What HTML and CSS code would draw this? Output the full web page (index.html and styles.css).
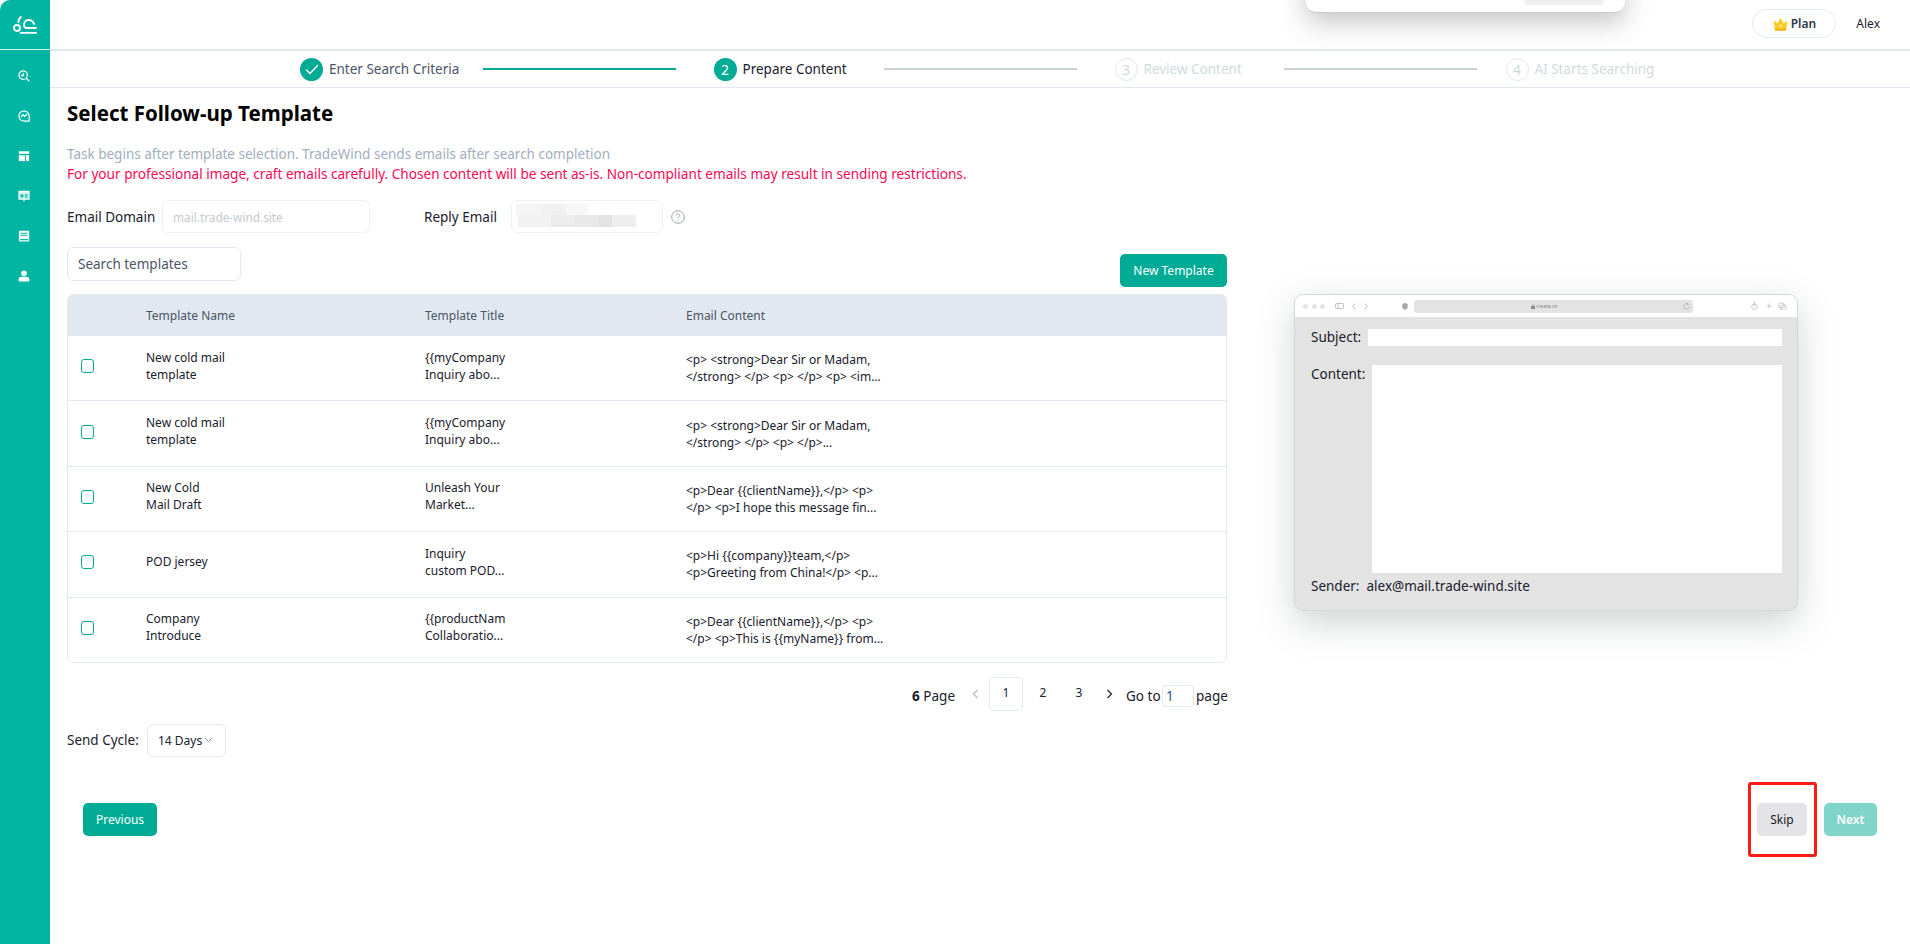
FILE: index.html
```html
<!DOCTYPE html>
<html lang="en">
<head>
<meta charset="utf-8">
<title>Select Follow-up Template</title>
<link rel="stylesheet" href="styles.css">
</head>
<body>
<div class="app">
  <aside class="sidebar">
    <div class="logo">
      <svg width="24" height="18" viewBox="0 0 24 18" fill="none" stroke="#fff" stroke-width="1.8" stroke-linecap="round"><circle cx="4" cy="12" r="3"/><path d="M7.5 16.8H23.2"/><path d="M8 1C6.2 2 5.5 3.5 5.5 6"/><path d="M21 8C20 5 18 4 15.5 4C12.5 4 11 6.5 11 9C11 11 12.5 12 14 12H23"/></svg>
    </div>
    <nav class="side-nav">
      <svg class="side-icon" viewBox="0 0 14 14" fill="none" stroke="#fff" stroke-width="1.4"><circle cx="6" cy="6" r="4.9"/><path d="M9.6 9.6L13.2 13.2"/><path d="M6.2 3.4V6.4H3.6" stroke-width="1.8"/></svg>
      <svg class="side-icon" viewBox="0 0 14 14" fill="none" stroke="#fff" stroke-width="1.4"><path d="M13 7A6 6 0 1 0 7 13H13Z"/><path d="M3.5 8.2L6 5.5L8 7.5L10.8 4.5"/></svg>
      <svg class="side-icon" viewBox="0 0 14 14" fill="#fff"><rect x="1" y="1.5" width="12" height="3"/><rect x="1" y="6" width="7" height="7"/><rect x="9.2" y="6" width="3.8" height="7"/></svg>
      <svg class="side-icon" viewBox="0 0 14 14" fill="#fff"><path d="M0.5 1H13.5V11.5H7.6V13.5H6.4V11.5H0.5Z"/><rect x="1.3" y="3" width="11.4" height="7.6" fill="#c5efe9"/><circle cx="4.6" cy="6.8" r="1.8" fill="#00b6a3"/><rect x="8" y="5.2" width="3.4" height="1.2" fill="#00b6a3"/><rect x="8" y="7.5" width="3.4" height="1.2" fill="#00b6a3"/></svg>
      <svg class="side-icon" viewBox="0 0 14 14" fill="#fff"><path d="M1 2.2C1 1.5 1.5 1 2.2 1H13V13.5H2.2C1.5 13.5 1 13 1 12.3ZM3 3.2V4.3H11V3.2ZM3 5.6V6.7H11V5.6ZM2.5 10.4V11.9H12V10.4Z" fill-rule="evenodd"/></svg>
      <svg class="side-icon" viewBox="0 0 14 14" fill="#fff"><circle cx="7" cy="3.8" r="3.3"/><path d="M0.8 13.5V10.8C0.8 9 2.6 8 4.2 8H9.8C11.4 8 13.2 9 13.2 10.8V13.5Z"/></svg>
    </nav>
  </aside>
  <main class="main">
    <header class="topbar">
      <button class="plan-btn">
        <svg width="15" height="14" viewBox="0 0 15 14"><path d="M.6 3.5L4.2 6.4L7.5 1L10.8 6.4L14.4 3.5L13 13.5H2Z" fill="#fdc921"/><circle cx="7.5" cy="8.8" r="1.3" fill="#fff3b8"/><rect x="2" y="12" width="11" height="1.5" fill="#f5a800"/></svg>
        <span>Plan</span>
      </button>
      <span class="user-name">Alex</span>
    </header>
    <div class="steps">
      <div class="step done">
        <span class="step-dot"><svg width="14" height="11" viewBox="0 0 14 11" fill="none" stroke="#fff" stroke-width="1.4"><path d="M1 5.5L5 9.5L13 1"/></svg></span>
        <span class="step-label">Enter Search Criteria</span>
      </div>
      <span class="step-line active"></span>
      <div class="step current">
        <span class="step-dot">2</span>
        <span class="step-label">Prepare Content</span>
      </div>
      <span class="step-line"></span>
      <div class="step todo">
        <span class="step-dot">3</span>
        <span class="step-label">Review Content</span>
      </div>
      <span class="step-line"></span>
      <div class="step todo last">
        <span class="step-dot">4</span>
        <span class="step-label">AI Starts Searching</span>
      </div>
    </div>
    <div class="content">
      <section class="left-col">
        <h1 class="page-title">Select Follow-up Template</h1>
        <p class="hint">Task begins after template selection. TradeWind sends emails after search completion</p>
        <p class="warning">For your professional image, craft emails carefully. Chosen content will be sent as-is. Non-compliant emails may result in sending restrictions.</p>
        <div class="email-row">
          <span class="field-label domain-label">Email Domain</span>
          <div class="field domain-field">mail.trade-wind.site</div>
          <span class="field-label reply-label">Reply Email</span>
          <div class="field reply-field"><span class="blur-a"></span><span class="blur-b"></span></div>
          <svg class="help" width="14" height="14" viewBox="0 0 14 14" fill="none" stroke="#9aa3ad"><circle cx="7" cy="7" r="6.3"/><path d="M5.2 5.4C5.2 4.4 6 3.8 7 3.8C8 3.8 8.8 4.4 8.8 5.3C8.8 6.5 7 6.6 7 8.2"/><path d="M7 9.5V10.6"/></svg>
        </div>
        <div class="tools-row">
          <div class="field search-field">Search templates</div>
          <button class="btn primary new-btn">New Template</button>
        </div>
        <div class="table-wrap">
          <div class="t-row t-head">
            <span></span><span>Template Name</span><span>Template Title</span><span>Email Content</span>
          </div>
          <div class="t-row">
            <span class="check"></span>
            <span class="name">New cold mail<br>template</span>
            <span class="title-cell">{{myCompany}}<br>Inquiry abo...</span>
            <span class="mail">&lt;p&gt; &lt;strong&gt;Dear Sir or Madam,<br>&lt;/strong&gt; &lt;/p&gt; &lt;p&gt; &lt;/p&gt; &lt;p&gt; &lt;im...</span>
          </div>
          <div class="t-row">
            <span class="check"></span>
            <span class="name">New cold mail<br>template</span>
            <span class="title-cell">{{myCompany}}<br>Inquiry abo...</span>
            <span class="mail">&lt;p&gt; &lt;strong&gt;Dear Sir or Madam,<br>&lt;/strong&gt; &lt;/p&gt; &lt;p&gt; &lt;/p&gt;...</span>
          </div>
          <div class="t-row">
            <span class="check"></span>
            <span class="name">New Cold<br>Mail Draft</span>
            <span class="title-cell">Unleash Your<br>Market...</span>
            <span class="mail">&lt;p&gt;Dear {{clientName}},&lt;/p&gt; &lt;p&gt;<br>&lt;/p&gt; &lt;p&gt;I hope this message fin...</span>
          </div>
          <div class="t-row">
            <span class="check"></span>
            <span class="name">POD jersey</span>
            <span class="title-cell">Inquiry<br>custom POD...</span>
            <span class="mail">&lt;p&gt;Hi {{company}}team,&lt;/p&gt;<br>&lt;p&gt;Greeting from China!&lt;/p&gt; &lt;p...</span>
          </div>
          <div class="t-row">
            <span class="check"></span>
            <span class="name">Company<br>Introduce</span>
            <span class="title-cell">{{productName}}<br>Collaboratio...</span>
            <span class="mail">&lt;p&gt;Dear {{clientName}},&lt;/p&gt; &lt;p&gt;<br>&lt;/p&gt; &lt;p&gt;This is {{myName}} from...</span>
          </div>
        </div>
        <div class="pager">
          <span class="total"><b>6</b> Page</span>
          <svg class="chev prev" width="7" height="10" viewBox="0 0 7 10" fill="none" stroke="#b8bcc4" stroke-width="1.3"><path d="M5.5 1L1.5 5L5.5 9"/></svg>
          <span class="page-num on">1</span>
          <span class="page-num two">2</span>
          <span class="page-num">3</span>
          <svg class="chev next-chev" width="7" height="10" viewBox="0 0 7 10" fill="none" stroke="#1f2937" stroke-width="1.3"><path d="M1.5 1L5.5 5L1.5 9"/></svg>
          <span class="goto">Go to</span>
          <span class="goto-input">1</span>
          <span class="goto-end">page</span>
        </div>
        <div class="cycle">
          <span class="cycle-label">Send Cycle:</span>
          <div class="cycle-select"><span>14 Days</span><svg width="9" height="6" viewBox="0 0 9 6" fill="none" stroke="#8b8f97"><path d="M1 1L4.5 4.5L8 1"/></svg></div>
        </div>
      </section>
      <aside class="preview">
        <div class="browser">
          <div class="chrome">
            <span class="dots"><i></i><i></i><i></i></span>
            <svg class="side-toggle" width="9" height="6" viewBox="0 0 9 6" fill="none" stroke="#a9a9a9" stroke-width=".7"><rect x=".5" y=".5" width="8" height="5" rx="1"/><path d="M3 .5V5.5"/></svg>
            <svg class="nav-arrows" width="16" height="7" viewBox="0 0 16 7" fill="none" stroke="#a0a0a0" stroke-width=".8"><path d="M3 .5L.8 3.5L3 6.5"/><path d="M13 .5L15.2 3.5L13 6.5"/></svg>
            <svg class="shield" width="6" height="7" viewBox="0 0 6 7"><path d="M.3 1L3 0L5.7 1V4C5.7 5.5 4 6.5 3 7C2 6.5 .3 5.5 .3 4Z" fill="#a9a9a9"/></svg>
            <div class="url">
              <svg class="lock" width="4" height="5" viewBox="0 0 4 5"><rect y="2" width="4" height="3" fill="#8f8f8f"/><path d="M1 2V1.2A1 1 0 0 1 3 1.2V2" fill="none" stroke="#8f8f8f" stroke-width=".5"/></svg>
              <span>create.cn</span>
              <svg width="7" height="7" viewBox="0 0 7 7" fill="none" stroke="#a0a0a0" stroke-width=".7"><path d="M5.8 2A2.7 2.7 0 1 0 6.2 3.6"/><path d="M3.6 .2L5 1L4.2 2.2"/></svg>
            </div>
            <svg class="chrome-right" width="36" height="8" viewBox="0 0 36 8" fill="none" stroke="#b5b5b5" stroke-width=".7"><rect x=".7" y="2" width="5.6" height="5.6" rx="2.8"/><path d="M3.5 0V4"/><path d="M18 1.5V6.5M15.5 4H20.5"/><rect x="28" y="1" width="5" height="5" rx="1"/><rect x="30" y="3" width="5" height="5" rx="1"/></svg>
          </div>
          <div class="browser-body">
            <div class="mail-line"><span class="subject-label">Subject:</span><div class="subject-box"></div></div>
            <div class="mail-block"><span class="content-label">Content:</span><div class="content-box"></div></div>
            <div class="sender">Sender:&nbsp; alex@mail.trade-wind.site</div>
          </div>
        </div>
      </aside>
    </div>
    <footer class="actions">
      <button class="btn primary">Previous</button>
      <div class="actions-right">
        <div class="skip-wrap">
          <button class="btn skip">Skip</button>
          <span class="annot"></span>
        </div>
        <button class="btn next">Next</button>
      </div>
    </footer>
  </main>
  <div class="popup"><span class="popup-btn"></span></div>
</div>
</body>
</html>
```
FILE: styles.css
```css
* { box-sizing: border-box; }
html, body { margin: 0; height: 100%; }
body {
  font-family: "Noto Sans", "Liberation Sans", sans-serif;
  font-size: 13.5px;
  color: #1a202c;
  background: #fff;
  overflow: hidden;
}
button { font-family: inherit; cursor: pointer; }
p, h1 { margin: 0; }

.app { display: flex; height: 944px; position: relative; overflow: hidden; }

.sidebar { width: 50px; flex: none; background: #00b6a3; border-top-left-radius: 10px; }
.logo { height: 50px; display: flex; align-items: center; justify-content: center; border-bottom: 1px solid #d8f3ef; }
.side-nav { display: flex; flex-direction: column; align-items: center; gap: 28px; padding: 20px 2px 0 0; }
.side-icon { width: 12px; height: 12px; display: block; }

.main { flex: 1; min-width: 0; display: flex; flex-direction: column; }

.topbar { height: 51px; flex: none; display: flex; align-items: center; justify-content: flex-end; padding: 0 30px 2px 0; border-bottom: 2px solid #e2e8f0; gap: 20px; }
.plan-btn { display: flex; align-items: center; justify-content: center; gap: 3px; width: 84px; height: 29px; background: #fff; border: 1px solid #e2e8f0; border-radius: 15px; font-size: 12px; font-weight: 600; color: #2d3748; padding: 0; }
.user-name { font-size: 12px; color: #1a202c; }

.steps { height: 37px; flex: none; display: flex; align-items: center; padding-left: 250px; border-bottom: 1px solid #e2e8f0; }
.step { display: flex; align-items: center; gap: 6px; }
.step-dot { width: 23px; height: 23px; flex: none; border-radius: 50%; display: flex; align-items: center; justify-content: center; font-size: 14px; }
.step-label { font-size: 13.5px; white-space: nowrap; }
.step.done .step-dot, .step.current .step-dot { background: #00ab96; color: #fff; }
.step.done { width: 159px; }
.step.current { width: 146.5px; }
.step.todo { width: 145px; }
.step.last { margin-left: -8.5px; width: auto; }
.step.done .step-label { color: #4a5568; }
.step.current .step-label { color: #1a202c; }
.step.todo .step-dot { border: 1px solid #e2e8e8; color: #cfd8dc; }
.step.todo .step-label { color: #cfdbdd; }
.step-line { width: 193px; height: 2px; background: #cbd1d6; margin: 0 37.5px 0 24px; flex: none; }
.step-line.active { background: #00ab96; }

.content { flex: 1; display: flex; min-height: 0; padding-left: 17px; }
.left-col { width: 1160px; flex: none; }
.page-title { font-size: 20.5px; font-weight: 700; color: #000; line-height: 27px; margin-top: 12px; }
.hint { color: #a0aec0; line-height: 20px; margin-top: 17px; }
.warning { color: #ff0a54; line-height: 20px; font-size: 13.6px; }

.email-row { display: flex; align-items: center; margin-top: 16px; }
.domain-label { width: 95px; }
.field { border: 1px solid #edf2f7; border-radius: 6px; height: 33px; background: #fff; display: flex; align-items: center; font-size: 11.8px; }
.domain-field { width: 208px; padding-left: 10px; color: #c4c9d0; }
.reply-label { margin-left: 54px; width: 87px; }
.reply-field { width: 152px; position: relative; }
.blur-a, .blur-b { position: absolute; }
.blur-a { left: 4px; top: 3px; width: 72px; height: 13px; background: linear-gradient(90deg, #f5f5f5 0 35%, #f1f1f1 35% 70%, #f7f7f7 70%); }
.blur-b { left: 6px; top: 14px; width: 118px; height: 12px; background: linear-gradient(90deg, #f2f2f2 0 28%, #ececec 28% 48%, #e9e9e9 48% 68%, #e3e3e3 68% 80%, #eeeeee 80%); }
.help { margin-left: 8px; }

.tools-row { display: flex; justify-content: space-between; align-items: flex-start; height: 40px; margin-top: 14px; }
.search-field { width: 174px; height: 34px; border-color: #e2e8f0; padding-left: 10px; font-size: 13.5px; color: #4a5568; }
.btn { height: 33px; border: 0; border-radius: 5px; font-size: 12px; padding: 0; }
.btn.primary { background: #00ab96; color: #fff; }
.new-btn { width: 107px; margin-top: 7px; }

.table-wrap { margin-top: 7px; border: 1px solid #e2e8f0; border-radius: 6px; overflow: hidden; }
.t-row { display: grid; grid-template-columns: 78px 279px 261px 1fr; align-items: center; height: 65.4px; border-top: 1px solid #e2e8f0; font-size: 12px; line-height: 17px; color: #1a202c; }
.t-row.t-head { height: 40px; border-top: 0; background: #e2e8f0; color: #4a5568; }
.check { width: 13px; height: 14px; margin: 0 0 4px 13px; border: 1px solid #00ab96; border-radius: 3px; background: #fff; }
.name { padding-bottom: 5px; }
.title-cell { width: 80px; overflow: hidden; white-space: nowrap; padding-bottom: 5px; }
.mail { white-space: nowrap; }

.pager { display: flex; align-items: center; justify-content: flex-end; margin-top: 14px; height: 34px; }
.total, .goto, .goto-end { padding-top: 4px; }
.page-num { width: 34px; height: 34px; display: flex; align-items: center; justify-content: center; border: 1px solid transparent; border-radius: 5px; font-size: 12px; margin-left: 2px; padding-bottom: 2px; }
.page-num.on { border-color: #e2e8f0; margin-left: 10.5px; }
.page-num.two { margin-left: 3px; }
.chev.prev { margin-left: 16.5px; }
.chev.next-chev { margin-left: 9.5px; }
.goto { margin-left: 13.5px; width: 34px; white-space: nowrap; }
.goto-input { width: 32px; height: 22px; border: 1px solid #e2e8f0; border-radius: 4px; margin: 4px 2px 0; padding-left: 3px; line-height: 20px; color: #2d5a8c; }
.goto-end { width: 31px; white-space: nowrap; }

.cycle { display: flex; align-items: center; margin-top: 13px; }
.cycle-label { width: 80px; }
.cycle-select { width: 79px; height: 33px; border: 1px solid #e2e8f0; border-radius: 6px; display: flex; align-items: center; gap: 2px; padding-left: 10px; font-size: 12px; }

.preview { padding: 0 0 0 67px; }
.browser { width: 504px; height: 317px; margin-top: 206px; border: 1px solid #d4d8dc; border-radius: 9px; overflow: hidden; background: #e3e3e3; box-shadow: 0 12px 36px rgba(100, 110, 110, .3); }
.chrome { height: 22px; background: #fff; display: flex; align-items: center; padding-left: 8px; }
.dots { display: flex; gap: 3.5px; }
.dots i { width: 5px; height: 5px; border-radius: 50%; background: #e4e4e4; display: block; }
.side-toggle { margin-left: 9.5px; }
.nav-arrows { margin-left: 8.5px; }
.shield { margin-left: 34px; }
.url { width: 279px; height: 13px; margin-left: 6px; background: #e3e3e3; border-radius: 3px; display: flex; align-items: center; justify-content: flex-end; padding-right: 3px; font-size: 5px; color: #888; position: relative; }
.url span { position: absolute; left: 122px; }
.lock { position: absolute; left: 117px; top: 4px; }
.chrome-right { margin-left: 58px; }

.browser-body { padding: 11px 15px 0 16px; font-size: 13.5px; }
.mail-line { display: flex; align-items: center; }
.subject-label { width: 57px; }
.content-label { width: 61px; }
.subject-box { flex: 1; height: 17px; background: #fff; }
.mail-block { display: flex; margin-top: 19px; }
.content-box { flex: 1; height: 208px; background: #fff; }
.sender { margin-top: 2px; line-height: 22px; }

.actions { position: absolute; left: 83px; right: 33px; top: 803px; display: flex; justify-content: space-between; }
.actions .btn.primary { width: 74px; }
.actions-right { display: flex; gap: 17px; }
.skip-wrap { position: relative; }
.btn.skip { width: 50px; background: #e4e4e8; color: #1a202c; }
.btn.next { width: 53px; background: #80d5ca; color: #fff; font-weight: 600; }
.annot { position: absolute; left: -9px; top: -21px; width: 69px; height: 75px; border: 3px solid #ff1c14; border-radius: 3px; pointer-events: none; }

.popup { position: absolute; left: 1306px; top: -40px; width: 319px; height: 53px; background: #fff; border-radius: 0 0 10px 10px; box-shadow: 0 10px 26px rgba(70, 70, 70, .3); border-bottom: 1px solid #c8c8c8; }
.popup-btn { position: absolute; left: 218px; bottom: 7px; width: 80px; height: 12px; background: #efefef; border-radius: 3px; }
```
